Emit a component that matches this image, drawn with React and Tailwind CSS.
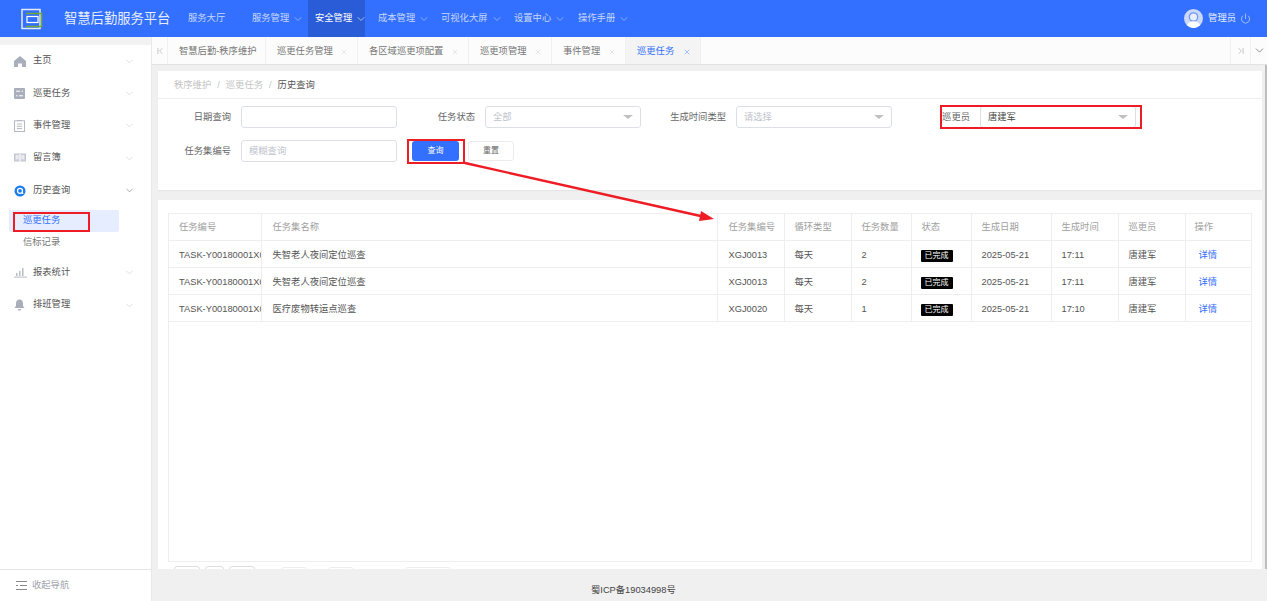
import { ChevronDown, ChevronFirst, ChevronLast, Power, X } from "lucide-react";

const navItems = [
  { label: "服务大厅", w: "w-[58px]" },
  { label: "服务管理", arrow: true, w: "w-[57px]" },
  { label: "安全管理", arrow: true, active: true, w: "w-[57px]" },
  { label: "成本管理", arrow: true, w: "w-[57px]" },
  { label: "可视化大屏", arrow: true, w: "w-[67px]" },
  { label: "设置中心", arrow: true, w: "w-[58px]" },
  { label: "操作手册", arrow: true, w: "w-[57px]" },
];

const tabs = [
  { label: "智慧后勤-秩序维护", w: "w-[98px]" },
  { label: "巡更任务管理", close: true, w: "w-[92px]" },
  { label: "各区域巡更项配置", close: true, w: "w-[111px]" },
  { label: "巡更项管理", close: true, w: "w-[83px]" },
  { label: "事件管理", close: true, w: "w-[74px]" },
  { label: "巡更任务", close: true, active: true, w: "w-[75px]" },
];

const rows = [
  ["失智老人夜间定位巡查", "XGJ0013", "2", "17:11"],
  ["失智老人夜间定位巡查", "XGJ0013", "2", "17:11"],
  ["医疗废物转运点巡查", "XGJ0020", "1", "17:10"],
];

const columns = [
  { label: "任务编号", w: "w-[92px]", pad: "pl-[10px]" },
  { label: "任务集名称", w: "w-[456px]", pad: "pl-[11px]" },
  { label: "任务集编号", w: "w-[67px]", pad: "pl-[11px]" },
  { label: "循环类型", w: "w-[67px]", pad: "pl-[10px]" },
  { label: "任务数量", w: "w-[60px]", pad: "pl-[10px]" },
  { label: "状态", w: "w-[60px]", pad: "pl-[10px]" },
  { label: "生成日期", w: "w-[80px]", pad: "pl-[10px]" },
  { label: "生成时间", w: "w-[67px]", pad: "pl-[10px]" },
  { label: "巡更员", w: "w-[67px]", pad: "pl-[10px]" },
  { label: "操作", w: "w-[67px]", pad: "pl-[9px]" },
];

function Logo() {
  return (
    <svg width="22" height="22" viewBox="0 0 22 22" fill="none">
      <rect x="1" y="1.500" width="18" height="19" stroke="#e3ebff" strokeWidth="1.500" />
      <path d="M5 5.500h15.500v13H5" stroke="#74a832" strokeWidth="1.500" />
      <rect x="6" y="8.500" width="11" height="6" stroke="#ffffff" strokeWidth="1.200" />
    </svg>
  );
}

function HomeIcon() {
  return (
    <svg width="12" height="11" viewBox="0 0 12 11" fill="#a9aebb">
      <path d="M6 0L12 5v6H8V7.500H4V11H0V5z" />
    </svg>
  );
}

function TaskIcon() {
  return (
    <svg width="11" height="11" viewBox="0 0 11 11">
      <rect width="11" height="11" rx="1" fill="#a9aebb" />
      <path d="M2 3.200h4M2 7.800h1.500" stroke="#fff" />
      <path d="M7.500 3.200h1.500M5 7.800h4" stroke="#fff" />
    </svg>
  );
}

function DocIcon() {
  return (
    <svg width="11" height="12" viewBox="0 0 11 12" fill="none" stroke="#b4b8c2">
      <rect x="0.500" y="0.800" width="10" height="10.700" />
      <path d="M3 0.500h5M3 4h5M3 6.300h5M3 8.600h5" />
    </svg>
  );
}

function BookIcon() {
  return (
    <svg width="12" height="10" viewBox="0 0 12 10" fill="none">
      <rect x="0.500" y="1" width="11" height="7" fill="#d5d8e0" stroke="#c0c4ce" />
      <path d="M6 1v8M2 3h2.500M2 5h2.500M7.500 3H10M7.500 5H10" stroke="#fff" />
    </svg>
  );
}

function HistoryIcon() {
  return (
    <svg width="12" height="12" viewBox="0 0 12 12" fill="none">
      <circle cx="6" cy="6" r="5.500" fill="#1a7cf0" />
      <circle cx="6" cy="5.800" r="2.500" stroke="#fff" strokeWidth="1.300" />
      <path d="M7.800 7.600L9.200 8.600" stroke="#fff" strokeWidth="1.300" />
    </svg>
  );
}

function ChartIcon() {
  return (
    <svg width="13" height="11" viewBox="0 0 13 11" fill="#b8bcc6">
      <rect x="2" y="6" width="1.500" height="3" />
      <rect x="5" y="4" width="1.500" height="5" />
      <rect x="8" y="1" width="1.500" height="8" />
      <rect x="0" y="9.600" width="13" height="1" />
    </svg>
  );
}

function BellIcon() {
  return (
    <svg width="11" height="12" viewBox="0 0 11 12" fill="#a9aebb">
      <path d="M5.500 0.500C3 0.500 2 2.500 2 4.500V7L0.500 9h10L9 7V4.500C9 2.500 8 0.500 5.500 0.500z" />
      <rect x="4" y="10" width="3" height="1.500" rx="0.700" />
    </svg>
  );
}

function CollapseIcon() {
  return (
    <svg width="11" height="9" viewBox="0 0 11 9" fill="none" stroke="#888">
      <path d="M0 0.500h11M4 4.500h7M0 8.500h11" />
      <path d="M0 4.500h2" />
    </svg>
  );
}

function Avatar() {
  return (
    <svg width="19" height="19" viewBox="0 0 19 19" className="mr-[5px]">
      <circle cx="9.500" cy="9.500" r="9.500" fill="#c9d8fb" />
      <circle cx="9.500" cy="8" r="4.800" fill="#6f97f5" />
      <circle cx="9.500" cy="8" r="3.500" fill="#e9effe" />
      <path d="M3 16c1.500-3 4-3.800 6.500-3.800S14.500 13 16 16c-3.500 4-9.500 4-13 0z" fill="#ffffff" />
    </svg>
  );
}

function MenuRow({ icon, label, open }) {
  return (
    <div className="flex h-[32.400px] items-center pl-[14px] pr-[16px]">
      <span className="flex w-[19px] items-center">{icon}</span>
      <span className="flex-1 text-[#555]">{label}</span>
      <ChevronDown
        size={11}
        strokeWidth={1.2}
        className={open ? "text-[#666]" : "text-[#c4c7cf]"}
      />
    </div>
  );
}

function Caret() {
  return (
    <span className="h-0 w-0 border-x-[5px] border-t-[4px] border-x-transparent border-t-[#c0c0c0]" />
  );
}

function Field({ label, labelWidth, children }) {
  return (
    <div className="flex items-center">
      <span className={`${labelWidth} pr-[10px] pt-[2px] text-right text-[#666]`}>{label}</span>
      {children}
    </div>
  );
}

function Box({ text, muted, caret }) {
  return (
    <div
      className={`flex h-[22px] w-[156px] items-center justify-between rounded-[3px] border border-[#dcdfe6] bg-white px-[7px] ${
        muted ? "text-[#c0c4cc]" : "text-[#444]"
      }`}
    >
      <span className="pt-[1px]">{text}</span>
      {caret && <Caret />}
    </div>
  );
}

export default function App() {
  return (
    <div className="relative flex h-[601px] w-[1267px] flex-col overflow-hidden bg-[#f0f0f0] font-['Liberation_Sans','Noto_Sans_CJK_SC',sans-serif] text-[9.300px]">
      {/* HEADER */}
      <header className="flex h-[37px] shrink-0 items-center bg-[#3370ff] text-white">
        <div className="ml-[21px] w-[43px]">
          <Logo />
        </div>
        <div className="w-[117px] text-[13.300px] text-[#e6eeff]">智慧后勤服务平台</div>
        <nav className="flex h-full gap-[6px]">
          {navItems.map((item) => (
            <div
              key={item.label}
              className={`flex h-full items-center gap-[3px] whitespace-nowrap pl-[7px] pt-[1px] ${item.w} ${
                item.active ? "bg-[#2a5cd8] text-white" : "text-[#c6d7ff]"
              }`}
            >
              {item.label}
              {item.arrow && <ChevronDown size={12} strokeWidth={1.2} className="shrink-0" />}
            </div>
          ))}
        </nav>
        <div className="ml-auto mr-[16px] flex items-center">
          <Avatar />
          <span className="text-[#e6eeff]">管理员</span>
          <Power size={11} strokeWidth={1.3} className="ml-[4px] text-[#e6eeff]" />
        </div>
      </header>

      <div className="flex min-h-0 flex-1">
        {/* SIDEBAR */}
        <aside className="flex w-[152px] shrink-0 flex-col border-r border-[#e8e8e8] bg-white">
          <div className="h-[8px] shrink-0 bg-[#f2f2f2]" />
          <div className="flex-1">
            <MenuRow icon={<HomeIcon />} label="主页" />
            <MenuRow icon={<TaskIcon />} label="巡更任务" />
            <MenuRow icon={<DocIcon />} label="事件管理" />
            <MenuRow icon={<BookIcon />} label="留言簿" />
            <MenuRow icon={<HistoryIcon />} label="历史查询" open />
            <div className="ml-[9px] mt-[3.500px] flex h-[22px] w-[110px] items-center rounded-[2px] bg-[#e6edff] pl-[14px] text-[#3370ff]">
              巡更任务
            </div>
            <div className="flex h-[21px] items-center pl-[23px] text-[#777]">信标记录</div>
            <div className="h-[3px]" />
            <MenuRow icon={<ChartIcon />} label="报表统计" />
            <MenuRow icon={<BellIcon />} label="排班管理" />
          </div>
          <div className="flex h-[32px] shrink-0 items-center gap-[5px] border-t border-[#e4e4e4] pl-[16px] text-[#a0a4ad]">
            <CollapseIcon />
            收起导航
          </div>
        </aside>

        {/* MAIN */}
        <main className="flex min-w-0 flex-1 flex-col">
          <div className="flex h-[28px] shrink-0 items-center border-b border-[#e2e2e2] bg-[#fcfcfc] text-[#777]">
            <div className="flex h-full w-[16px] items-center justify-center border-r border-[#f0f0f0]">
              <ChevronFirst size={10} className="text-[#bbb]" />
            </div>
            {tabs.map((tab) => (
              <div
                key={tab.label}
                className={`flex h-full items-center justify-between whitespace-nowrap border-r border-[#f0f0f0] pl-[11px] pr-[9px] pt-[2px] ${tab.w} ${
                  tab.active ? "bg-[#f4f4f4] text-[#3370ff]" : ""
                }`}
              >
                {tab.label}
                {tab.close && (
                  <X size={8} strokeWidth={1.2} className={tab.active ? "text-[#3370ff]" : "text-[#c4c4c4]"} />
                )}
              </div>
            ))}
            <div className="ml-auto flex h-full w-[20px] items-center justify-center border-l border-[#f0f0f0] text-[#bbb]">
              <ChevronLast size={10} />
            </div>
            <div className="flex h-full w-[17px] items-center justify-center border-l border-[#f0f0f0]">
              <ChevronDown size={13} strokeWidth={1.2} className="text-[#555]" />
            </div>
          </div>

          <div className="min-h-0 flex-1 overflow-hidden pl-[6px] pr-[5px] pt-[6px]">
            {/* FILTERS */}
            <section className="h-[119px] bg-white shadow-[0_1px_1px_#e6e6e6]">
              <div className="flex h-[28px] items-center gap-[6px] border-b border-[#eeeeee] pl-[16px] pt-[2px] text-[#c4c4c4]">
                <span>秩序维护</span>
                <span>/</span>
                <span>巡更任务</span>
                <span>/</span>
                <span className="text-[#555]">历史查询</span>
              </div>
              <div className="flex pt-[7px]">
                <Field label="日期查询" labelWidth="w-[83px]">
                  <Box />
                </Field>
                <Field label="任务状态" labelWidth="w-[88px]">
                  <Box text="全部" muted caret />
                </Field>
                <Field label="生成时间类型" labelWidth="w-[95px]">
                  <Box text="请选择" muted caret />
                </Field>
                <Field label="巡更员" labelWidth="w-[88px]">
                  <Box text="唐建军" caret />
                </Field>
              </div>
              <div className="flex items-center pt-[12px]">
                <Field label="任务集编号" labelWidth="w-[83px]">
                  <Box text="模糊查询" muted />
                </Field>
                <button className="ml-[15px] flex h-[20px] w-[47px] items-center justify-center rounded-[3px] bg-[#3370ff] text-[8px] text-white">
                  查询
                </button>
                <button className="ml-[9px] flex h-[20px] w-[46px] items-center justify-center rounded-[3px] border border-[#ececec] bg-white text-[8px] text-[#666]">
                  重置
                </button>
              </div>
            </section>

            {/* TABLE */}
            <section className="mt-[10px] h-[400px] bg-white px-[10px] pt-[13px]">
              <div className="h-[349px] border border-[#eeeeee]">
                <table className="w-full table-fixed border-collapse text-left">
                  <thead>
                    <tr className="h-[26px] text-[#a0a0a0]">
                      {columns.map((col) => (
                        <th
                          key={col.label}
                          className={`${col.w} ${col.pad} border-b border-r border-[#eeeeee] pt-[3px] font-normal last:border-r-0`}
                        >
                          {col.label}
                        </th>
                      ))}
                    </tr>
                  </thead>
                  <tbody className="text-[#555] [&_td]:pt-[4px]">
                    {rows.map((row, i) => (
                      <tr key={i} className="h-[27px]">
                        <td className="overflow-hidden whitespace-nowrap border-b border-r border-[#eeeeee] pl-[10px]">
                          TASK-Y00180001X0
                        </td>
                        <td className="border-b border-r border-[#eeeeee] pl-[11px]">{row[0]}</td>
                        <td className="border-b border-r border-[#eeeeee] pl-[11px]">{row[1]}</td>
                        <td className="border-b border-r border-[#eeeeee] pl-[10px]">每天</td>
                        <td className="border-b border-r border-[#eeeeee] pl-[10px]">{row[2]}</td>
                        <td className="border-b border-r border-[#eeeeee] pl-[9px]">
                          <span className="flex h-[12px] w-[32px] items-center justify-center rounded-[1px] bg-black text-[8px] text-white">
                            已完成
                          </span>
                        </td>
                        <td className="border-b border-r border-[#eeeeee] pl-[10px]">2025-05-21</td>
                        <td className="border-b border-r border-[#eeeeee] pl-[10px]">{row[3]}</td>
                        <td className="border-b border-r border-[#eeeeee] pl-[10px]">唐建军</td>
                        <td className="border-b border-[#eeeeee] pl-[13px] text-[#3370ff]">详情</td>
                      </tr>
                    ))}
                  </tbody>
                </table>
              </div>
              <div className="mt-[4px] flex pl-[6px]">
                <div className="h-[20px] w-[26px] rounded-[3px] border border-[#ddd]" />
                <div className="ml-[5px] h-[20px] w-[19px] rounded-[3px] border border-[#ddd]" />
                <div className="ml-[5px] h-[20px] w-[26px] rounded-[3px] border border-[#ddd]" />
                <div className="ml-[26px] mt-[1px] h-[20px] w-[26px] rounded-[3px] border border-[#eee]" />
                <div className="ml-[21px] mt-[1px] h-[20px] w-[26px] rounded-[3px] border border-[#eee]" />
                <div className="ml-[51px] mt-[1px] h-[20px] w-[46px] rounded-[3px] border border-[#eee]" />
              </div>
            </section>
          </div>

          <footer className="flex h-[32px] shrink-0 items-center bg-[#f0f0f0] pl-[439px] pt-[11px] text-[#444]">
            蜀ICP备19034998号
          </footer>
        </main>
      </div>

      {/* scrollbar strip */}
      <div className="absolute bottom-[32px] right-0 top-[65px] w-[2px] bg-[#bdbdbd]" />

      {/* red annotations */}
      <div className="absolute left-[13px] top-[212px] h-[20px] w-[77px] border-2 border-[#ee1c25]" />
      <div className="absolute left-[407px] top-[139px] h-[25px] w-[58px] border-2 border-[#ee1c25]" />
      <div className="absolute left-[940px] top-[105px] h-[24px] w-[202px] border-2 border-[#ee1c25]" />
      <svg className="absolute left-[460px] top-[155px]" width="260" height="70" viewBox="0 0 260 70">
        <path d="M5 8L245 62" stroke="#ee1c25" strokeWidth="2.400" />
        <path d="M254 64L241 56L239 66z" fill="#ee1c25" />
      </svg>
    </div>
  );
}
